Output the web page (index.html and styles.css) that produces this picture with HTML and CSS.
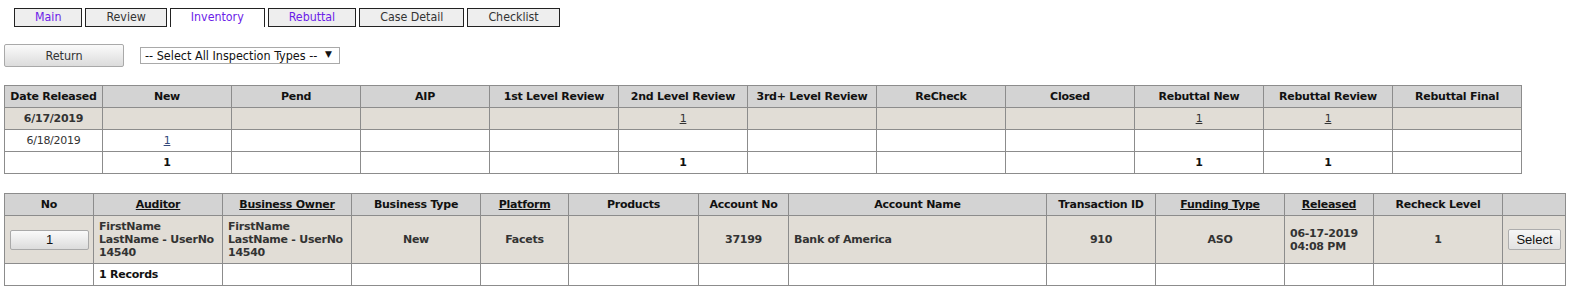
FILE: index.html
```html
<!DOCTYPE html>
<html lang="en">
<head>
    <meta charset="UTF-8">
    <meta name="viewport" content="width=device-width, initial-scale=1.0">
    <title>Inventory</title>
    <link rel="stylesheet" href="styles.css">
</head>
<body>
    <div class="tabs">
        <a class="tab visited" href="#">Main</a>
        <a class="tab" href="#">Review</a>
        <a class="tab active" href="#">Inventory</a>
        <a class="tab visited" href="#">Rebuttal</a>
        <a class="tab" href="#">Case Detail</a>
        <a class="tab" href="#">Checklist</a>
    </div>

    <div class="toolbar">
        <button class="btn-return">Return</button>
        <span class="select-wrap">
            <select class="type-select">
                <option>-- Select All Inspection Types --</option>
            </select>
        </span>
    </div>

    <table class="grid summary">
        <colgroup>
            <col class="c-date">
            <col span="11">
        </colgroup>
        <thead>
            <tr>
                <th>Date Released</th>
                <th>New</th>
                <th>Pend</th>
                <th>AIP</th>
                <th>1st Level Review</th>
                <th>2nd Level Review</th>
                <th>3rd+ Level Review</th>
                <th>ReCheck</th>
                <th>Closed</th>
                <th>Rebuttal New</th>
                <th>Rebuttal Review</th>
                <th>Rebuttal Final</th>
            </tr>
        </thead>
        <tbody>
            <tr class="group">
                <td class="strong">6/17/2019</td>
                <td></td>
                <td></td>
                <td></td>
                <td></td>
                <td><a href="#">1</a></td>
                <td></td>
                <td></td>
                <td></td>
                <td><a href="#">1</a></td>
                <td><a href="#">1</a></td>
                <td></td>
            </tr>
            <tr>
                <td>6/18/2019</td>
                <td><a class="blue" href="#">1</a></td>
                <td></td>
                <td></td>
                <td></td>
                <td></td>
                <td></td>
                <td></td>
                <td></td>
                <td></td>
                <td></td>
                <td></td>
            </tr>
            <tr class="total">
                <td></td>
                <td>1</td>
                <td></td>
                <td></td>
                <td></td>
                <td>1</td>
                <td></td>
                <td></td>
                <td></td>
                <td>1</td>
                <td>1</td>
                <td></td>
            </tr>
        </tbody>
    </table>

    <table class="grid records">
        <colgroup>
            <col class="w89">
            <col class="w129">
            <col class="w129">
            <col class="w129">
            <col class="w88">
            <col class="w130">
            <col class="w90">
            <col class="w258">
            <col class="w109">
            <col class="w129">
            <col class="w89">
            <col class="w129">
            <col>
        </colgroup>
        <thead>
            <tr>
                <th>No</th>
                <th><a href="#">Auditor</a></th>
                <th><a href="#">Business Owner</a></th>
                <th>Business Type</th>
                <th><a href="#">Platform</a></th>
                <th>Products</th>
                <th>Account No</th>
                <th>Account Name</th>
                <th>Transaction ID</th>
                <th><a href="#">Funding Type</a></th>
                <th><a href="#">Released</a></th>
                <th>Recheck Level</th>
                <th></th>
            </tr>
        </thead>
        <tbody>
            <tr class="group data">
                <td><button class="btn-no">1</button></td>
                <td class="left">FirstName LastName - UserNo 14540</td>
                <td class="left">FirstName LastName - UserNo 14540</td>
                <td>New</td>
                <td>Facets</td>
                <td></td>
                <td>37199</td>
                <td class="left">Bank of America</td>
                <td>910</td>
                <td>ASO</td>
                <td class="left">06-17-2019<br>04:08 PM</td>
                <td>1</td>
                <td><button class="btn-select">Select</button></td>
            </tr>
            <tr class="total">
                <td></td>
                <td class="left">1 Records</td>
                <td></td>
                <td></td>
                <td></td>
                <td></td>
                <td></td>
                <td></td>
                <td></td>
                <td></td>
                <td></td>
                <td></td>
                <td></td>
            </tr>
        </tbody>
    </table>
</body>
</html>
```

FILE: styles.css
```css
:root {
    --border: #8c8c8c;
    --header-bg: #d3d3d3;
    --row-bg: #e1ddd6;
    --text: #333;
    --visited: #6b21e8;
}

body {
    margin: 0;
    padding: 8px 4px;
    background: #fff;
    color: var(--text);
    font-family: "DejaVu Sans", Verdana, sans-serif;
    font-size: 11px;
}

/* tabs */
.tabs {
    display: flex;
    gap: 3px;
    padding-left: 10px;
    height: 19px;
}

.tab {
    display: block;
    box-sizing: border-box;
    height: 19px;
    padding: 0 20px;
    border: 1px solid #222;
    background: #eee;
    color: #333;
    text-decoration: none;
    font-family: "DejaVu Sans Condensed", "DejaVu Sans", sans-serif;
    font-size: 12.3px;
    line-height: 17px;
    text-align: center;
}

.tab.visited {
    color: var(--visited);
}

.tab.active {
    background: #fff;
    border-bottom: none;
    color: var(--visited);
}

/* toolbar */
.toolbar {
    display: flex;
    align-items: center;
    gap: 16px;
    margin-top: 17px;
    height: 23px;
}

.btn-return {
    width: 120px;
    height: 23px;
    border: 1px solid #a9a9a9;
    border-radius: 2px;
    background: linear-gradient(#fafafa, #dcdcdc);
    color: #333;
    font-family: "DejaVu Sans Condensed", "DejaVu Sans", sans-serif;
    font-size: 12.5px;
    padding: 0;
}

.select-wrap {
    position: relative;
    display: inline-block;
}

.type-select {
    appearance: none;
    -webkit-appearance: none;
    width: 200px;
    height: 17px;
    border: 1px solid #a9a9a9;
    border-radius: 0;
    background: #fff;
    color: #111;
    font-family: "DejaVu Sans Condensed", "DejaVu Sans", sans-serif;
    font-size: 12.5px;
    padding: 0 0 0 4px;
    margin: 0;
    line-height: 15px;
}

.select-wrap::after {
    content: "\25BC";
    position: absolute;
    right: 8px;
    top: 2px;
    font-size: 9px;
    color: #111;
    pointer-events: none;
}

/* tables */
.grid {
    border-collapse: collapse;
    table-layout: fixed;
    margin-top: 18px;
    letter-spacing: -0.25px;
}

.grid th,
.grid td {
    border: 1px solid var(--border);
    padding: 4px 5px;
    line-height: 13px;
    text-align: center;
    vertical-align: middle;
    overflow: hidden;
}

.grid th {
    background: var(--header-bg);
    color: #111;
    font-weight: bold;
    white-space: nowrap;
    padding: 4px 2px;
}

.grid th a {
    color: #111;
}

.grid td a {
    color: #333;
}

.grid td a.blue {
    color: #34497a;
}

.grid .group td {
    background: var(--row-bg);
}

.grid .strong,
.grid .total td,
.grid .data td {
    font-weight: bold;
}

.grid .total td {
    color: #111;
}

.grid td.left {
    text-align: left;
    padding: 4px 1px 4px 5px;
}

.summary {
    width: 1518px;
}

.summary tbody tr {
    height: 22px;
}

.c-date {
    width: 98px;
}

.records {
    width: 1562px;
    margin-top: 19px;
}

.records .data {
    height: 48px;
}

.records .total {
    height: 22px;
}

.w88 { width: 88px; }
.w89 { width: 89px; }
.w90 { width: 90px; }
.w109 { width: 109px; }
.w129 { width: 129px; }
.w130 { width: 130px; }
.w258 { width: 258px; }

.btn-no {
    width: 79px;
    height: 20px;
    padding: 0;
    border: 1px solid #a9a9a9;
    border-radius: 2px;
    background: linear-gradient(#fafafa, #dcdcdc);
    color: #111;
    font-family: "Liberation Sans", Arial, sans-serif;
    font-size: 13px;
    font-weight: normal;
    letter-spacing: 0;
}

.btn-select {
    width: 53px;
    height: 21px;
    padding: 0;
    border: 1px solid #adadad;
    border-radius: 2px;
    background: linear-gradient(#f6f6f6, #e2e2e2);
    color: #111;
    font-family: "Liberation Sans", Arial, sans-serif;
    font-size: 13px;
    font-weight: normal;
    letter-spacing: 0;
}
```
